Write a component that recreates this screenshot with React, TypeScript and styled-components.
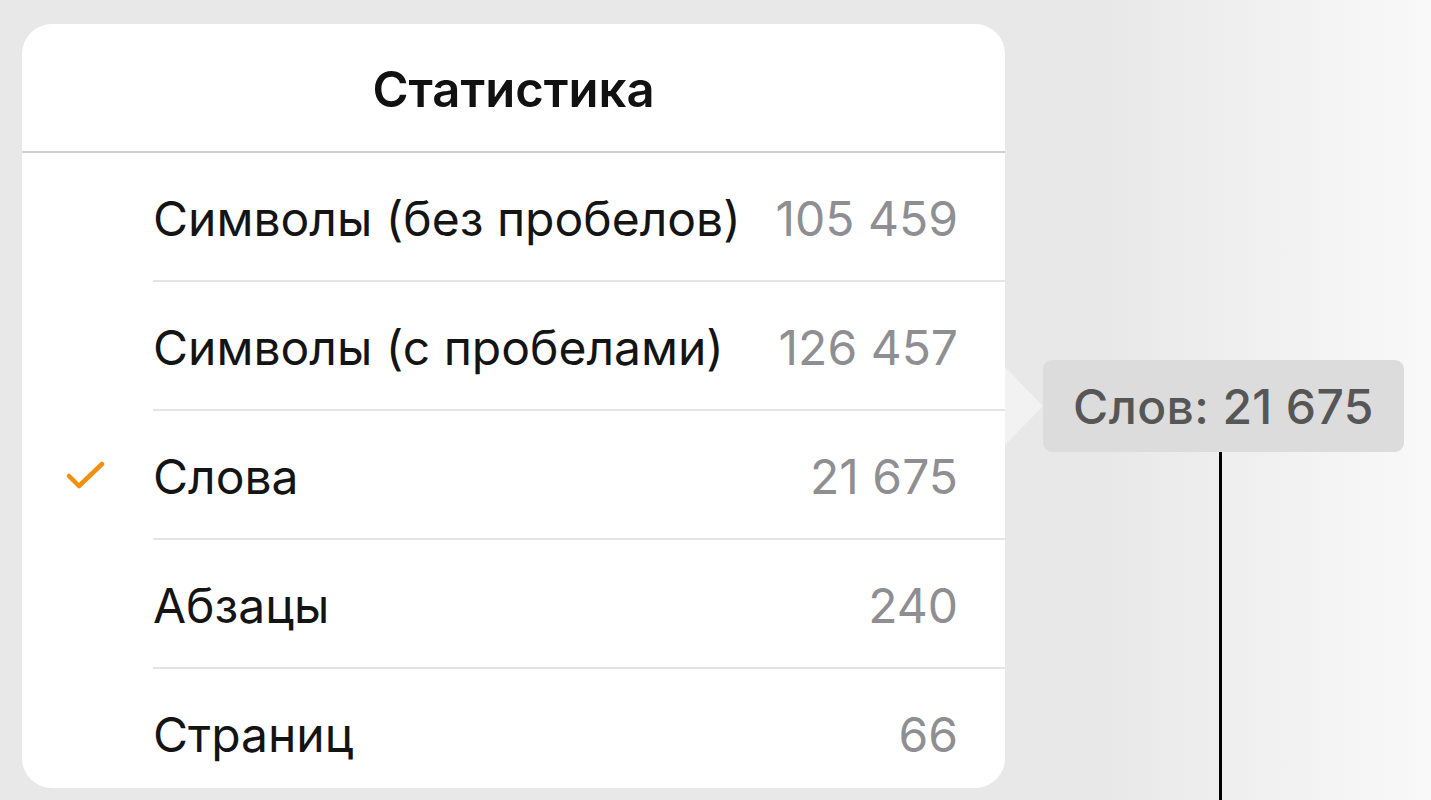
import React from "react";
import styled, { createGlobalStyle } from "styled-components";

const Global = createGlobalStyle`
  html, body { margin: 0; padding: 0; }
  body {
    width: 1431px;
    height: 800px;
    overflow: hidden;
    font-family: Inter, "Noto Sans", "DejaVu Sans", sans-serif;
    background: linear-gradient(90deg, #e8e8e8 0px, #e8e8e8 1100px, #f9f9f9 1431px);
  }
`;

const Page = styled.div`
  display: flex;
  align-items: flex-start;
  height: 800px;
  padding: 24px 0 0 22px;
  box-sizing: border-box;
`;

const Card = styled.div`
  width: 983px;
  height: 764px;
  background: #ffffff;
  border-radius: 30px;
  overflow: hidden;
  display: flex;
  flex-direction: column;
  flex-shrink: 0;
`;

const Header = styled.div`
  height: 124px;
  padding-top: 3px;
  flex-shrink: 0;
  display: flex;
  align-items: center;
  justify-content: center;
  border-bottom: 2px solid #cfcfcf;
  font-size: 49px;
  font-weight: 600;
  color: #111;
`;

const Row = styled.div<{ $last?: boolean }>`
  display: flex;
  align-items: stretch;
  height: ${(p) => (p.$last ? "auto" : "129px")};
  flex: ${(p) => (p.$last ? "1" : "0 0 auto")};
`;

const CheckCell = styled.div`
  width: 131px;
  display: flex;
  align-items: center;
  justify-content: center;
  padding-left: 8px;
  padding-right: 12px;
  box-sizing: border-box;
`;

const RowBody = styled.div<{ $last?: boolean }>`
  flex: 1;
  display: flex;
  align-items: center;
  justify-content: space-between;
  padding-right: 47px;
  border-bottom: ${(p) => (p.$last ? "none" : "2px solid #e4e4e4")};
`;

const Label = styled.span<{ $last?: boolean }>`
  font-size: 48px;
  color: #141414;
  padding-top: ${(p) => (p.$last ? "12px" : "4px")};
`;

const Value = styled.span<{ $last?: boolean }>`
  font-size: 48px;
  color: #8f8f93;
  padding-top: ${(p) => (p.$last ? "12px" : "4px")};
`;

const Callout = styled.div`
  display: flex;
  flex-direction: column;
  margin-top: 336px;
`;

const CalloutTop = styled.div`
  display: flex;
  align-items: center;
`;

const Arrow = styled.div`
  width: 0;
  height: 0;
  border-top: 39px solid transparent;
  border-bottom: 39px solid transparent;
  border-left: 38px solid #f2f2f2;
`;

const Bubble = styled.div`
  width: 361px;
  height: 92px;
  background: #dcdcdc;
  border-radius: 9px;
  display: flex;
  align-items: center;
  justify-content: center;
  font-size: 48px;
  font-weight: 500;
  color: #565656;
  letter-spacing: 0.4px;
`;

const Stem = styled.div`
  width: 3px;
  height: 360px;
  background: #000;
  margin-left: 214px;
`;

const Check = () => (
  <svg width="40" height="32" viewBox="0 0 40 32">
    <path
      d="M3 16 L13 26 L36 4"
      fill="none"
      stroke="#f0900e"
      strokeWidth="4.5"
      strokeLinecap="round"
      strokeLinejoin="round"
    />
  </svg>
);

const rows = [
  { label: "Символы (без пробелов)", value: "105 459" },
  { label: "Символы (с пробелами)", value: "126 457" },
  { label: "Слова", value: "21 675", checked: true },
  { label: "Абзацы", value: "240" },
  { label: "Страниц", value: "66" },
];

export default function App() {
  return (
    <>
      <Global />
      <Page>
        <Card>
          <Header>Статистика</Header>
          {rows.map((r, i) => {
            const last = i === rows.length - 1;
            return (
              <Row key={r.label} $last={last}>
                <CheckCell>{r.checked ? <Check /> : null}</CheckCell>
                <RowBody $last={last}>
                  <Label $last={last}>{r.label}</Label>
                  <Value $last={last}>{r.value}</Value>
                </RowBody>
              </Row>
            );
          })}
        </Card>
        <Callout>
          <CalloutTop>
            <Arrow />
            <Bubble>Слов: 21 675</Bubble>
          </CalloutTop>
          <Stem />
        </Callout>
      </Page>
    </>
  );
}
